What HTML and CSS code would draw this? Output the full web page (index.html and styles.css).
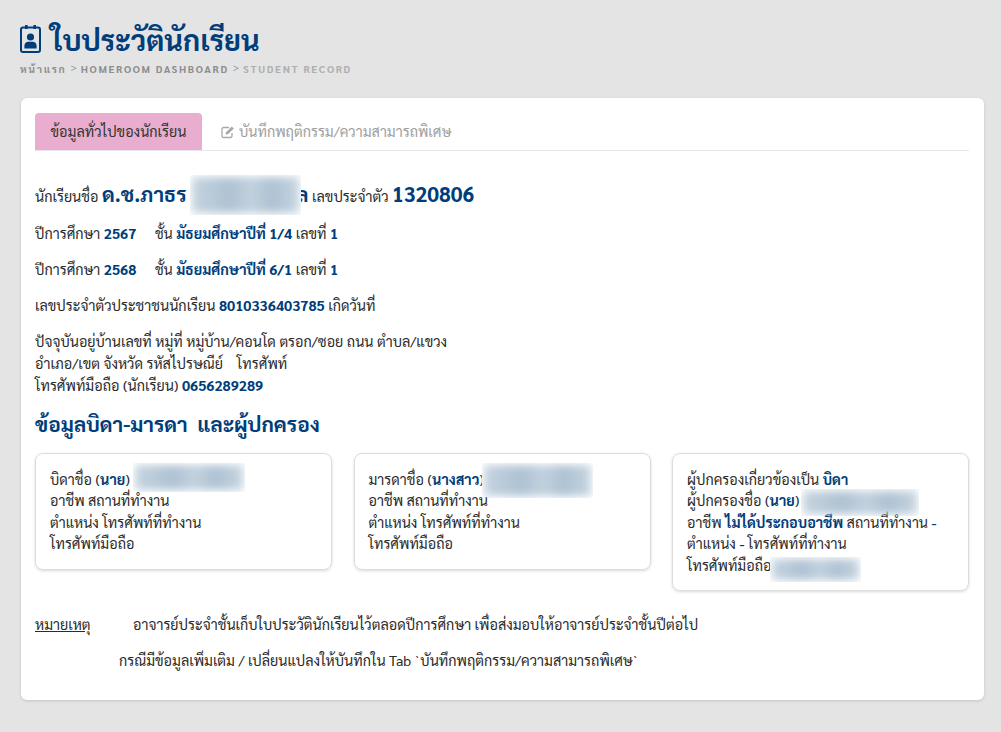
FILE: index.html
```html
<!DOCTYPE html>
<html lang="th">
<head>
<meta charset="utf-8">
<title>ใบประวัตินักเรียน</title>
<link rel="stylesheet" href="styles.css">
</head>
<body>
<header class="page-head">
  <h1 class="page-title">
    <svg class="title-icon" viewBox="0 0 21 28" aria-hidden="true">
      <rect x="1" y="2.500" width="19" height="24.500" rx="2" fill="none" stroke="#003d7a" stroke-width="2"/>
      <rect x="5" y="0" width="2.600" height="4" fill="#003d7a"/>
      <rect x="13.400" y="0" width="2.600" height="4" fill="#003d7a"/>
      <circle cx="10.500" cy="12" r="3.600" fill="#003d7a"/>
      <path d="M4.400 23.500v-2.800c0-2.600 2-3.900 3.800-3.900h4.600c1.800 0 3.800 1.300 3.800 3.900v2.800z" fill="#003d7a"/>
    </svg>
    <span>ใบประวัตินักเรียน</span>
  </h1>
  <nav class="crumbs">
    <span>หน้าแรก</span><span class="sep">&gt;</span><span>HOMEROOM DASHBOARD</span><span class="sep">&gt;</span><span class="crumb-last">STUDENT RECORD</span>
  </nav>
</header>
<main class="card">
  <div class="tabs">
    <div class="tab tab-active">ข้อมูลทั่วไปของนักเรียน</div>
    <div class="tab">
      <svg class="tab-icon" viewBox="0 0 14 14" aria-hidden="true">
        <path d="M11 8v3a1.500 1.500 0 0 1-1.500 1.500h-7A1.500 1.500 0 0 1 1 11V4a1.500 1.500 0 0 1 1.500-1.500H8" fill="none" stroke="#a9a9a9" stroke-width="1.300"/>
        <path d="M5 7.200 10.800 1.400l2 2L7 9.200l-2.400.4z" fill="#a9a9a9"/>
      </svg>
      บันทึกพฤติกรรม/ความสามารถพิเศษ
    </div>
  </div>
  <section class="info">
    <p class="line-main">นักเรียนชื่อ <b class="big">ด.ช.ภาธร</b> <span class="blur b-name"><i></i></span><b class="big">ล</b> เลขประจำตัว <b class="big">1320806</b></p>
    <p>ปีการศึกษา <b>2567</b> <span class="gap"></span>ชั้น <b>มัธยมศึกษาปีที่ 1/4</b> เลขที่ <b>1</b></p>
    <p>ปีการศึกษา <b>2568</b> <span class="gap"></span>ชั้น <b>มัธยมศึกษาปีที่ 6/1</b> เลขที่ <b>1</b></p>
    <p>เลขประจำตัวประชาชนนักเรียน <b>8010336403785</b> เกิดวันที่</p>
    <p>ปัจจุบันอยู่บ้านเลขที่ หมู่ที่ หมู่บ้าน/คอนโด ตรอก/ซอย ถนน ตำบล/แขวง<br>อำเภอ/เขต จังหวัด รหัสไปรษณีย์&nbsp;&nbsp;&nbsp; โทรศัพท์<br>โทรศัพท์มือถือ (นักเรียน) <b>0656289289</b></p>
  </section>
  <h2 class="section-title">ข้อมูลบิดา-มารดา &nbsp;และผู้ปกครอง</h2>
  <section class="people">
    <div class="person">บิดาชื่อ (<b>นาย</b>) <span class="blur b-father"><i></i></span><br>อาชีพ สถานที่ทำงาน<br>ตำแหน่ง โทรศัพท์ที่ทำงาน<br>โทรศัพท์มือถือ</div>
    <div class="person">มารดาชื่อ (<b>นางสาว</b>) <span class="blur b-mother"><i></i></span><br>อาชีพ สถานที่ทำงาน<br>ตำแหน่ง โทรศัพท์ที่ทำงาน<br>โทรศัพท์มือถือ</div>
    <div class="person">ผู้ปกครองเกี่ยวข้องเป็น <b>บิดา</b><br>ผู้ปกครองชื่อ (<b>นาย</b>) <span class="blur b-guardian"><i></i></span><br>อาชีพ <b>ไม่ได้ประกอบอาชีพ</b> สถานที่ทำงาน <b>-</b><br>ตำแหน่ง <b>-</b> โทรศัพท์ที่ทำงาน<br>โทรศัพท์มือถือ <span class="blur b-phone"><i></i></span></div>
  </section>
  <section class="notes">
    <p class="note-first"><u class="note-label">หมายเหตุ</u>อาจารย์ประจำชั้นเก็บใบประวัตินักเรียนไว้ตลอดปีการศึกษา เพื่อส่งมอบให้อาจารย์ประจำชั้นปีต่อไป</p>
    <p class="note-second">กรณีมีข้อมูลเพิ่มเติม / เปลี่ยนแปลงให้บันทึกใน Tab `บันทึกพฤติกรรม/ความสามารถพิเศษ`</p>
  </section>
</main>
</body>
</html>
```
FILE: styles.css
```css
* { box-sizing: border-box; }
html, body { margin: 0; height: 732px; overflow: hidden; }
body {
  background: #e4e4e4;
  font-family: Sarabun, "Noto Sans Thai Looped", Lato, sans-serif;
  font-size: 14.4px;
  line-height: 21.6px;
  color: #2b2b2b;
  padding: 0 17px 0 21px;
}
.page-head { height: 98px; padding-top: 20px; }
.page-title {
  margin: 0 0 0 -1px;
  display: flex;
  align-items: center;
  gap: 9.500px;
  height: 38px;
  font-size: 28.8px;
  line-height: 38px;
  font-weight: 700;
  color: #003d7a;
}
.title-icon { width: 21px; height: 28px; flex: none; }
.crumbs {
  margin: 3px 0 0 -1px;
  display: flex;
  gap: 4px;
  font-size: 10.4px;
  line-height: 16px;
  font-weight: 700;
  letter-spacing: 1.650px;
  color: #8f8f8f;
}
.crumbs .sep { font-weight: 400; line-height: 11px; letter-spacing: 0; }
.crumb-last { color: #b0b0b0; }
.card {
  height: 602px;
  background: #fff;
  border-radius: 6px;
  box-shadow: 0 1px 3px rgba(0, 0, 0, .15);
  padding: 15px 15px 0 14px;
}
.tabs { display: flex; height: 38px; border-bottom: 1px solid #e6e6ee; }
.tab {
  height: 37px;
  padding: 0 0 0 19px;
  display: flex;
  align-items: center;
  gap: 4px;
  color: #a0a0a0;
}
.tab-active {
  width: 167px;
  justify-content: center;
  padding: 0;
  background: #e9aecf;
  color: #333;
  border-radius: 4px 4px 0 0;
}
.tab-icon { width: 14px; height: 14px; flex: none; }
.info { padding-top: 29px; }
.info p { margin: 0 0 14.400px; }
.info b { color: #003d7a; }
.info .line-main { height: 27px; line-height: 27px; margin-bottom: 16.400px; white-space: pre; }
.big { font-size: 20.800px; }
.gap { display: inline-block; width: 15px; }
.section-title {
  margin: -2px 0 0;
  font-size: 20.800px;
  line-height: 30px;
  font-weight: 700;
  color: #003d7a;
}
.people {
  margin-top: 14px;
  display: grid;
  grid-template-columns: repeat(3, 297px);
  column-gap: 21.500px;
  align-items: start;
}
.person {
  border: 1px solid #dcdcdc;
  border-radius: 8px;
  box-shadow: 0 1px 3px rgba(0, 0, 0, .15);
  padding: 15px 14px 14px;
}
.person b { color: #003d7a; }
.blur {
  display: inline-block;
  vertical-align: middle;
  overflow: hidden;
  background: #fff;
  height: 26px;
  margin: -11px 0;
}
.blur i {
  display: block;
  margin: 2px;
  height: calc(100% - 4px);
  background: linear-gradient(90deg, #c6d4e0, #aec2d3 35%, #c2d1de 55%, #aec2d3 75%, #c6d4e0);
  filter: blur(4px);
}
.b-name { position: relative; z-index: 1; width: 111px; height: 40px; margin: -23px -5px -17px 0; }
.b-father { width: 112px; height: 29px; margin: -16px 0 -9px; }
.b-mother { width: 111px; height: 35px; margin: -17px 0 -17px -5px; }
.b-guardian { width: 118px; height: 27px; margin: -13px 0 -13px -2px; }
.b-phone { width: 91px; height: 25px; margin: -8px 0 -13px -5px; }
.notes { margin-top: 23px; }
.notes p { margin: 0; }
.note-label { display: inline-block; width: 98px; }
.note-first { margin-bottom: 14px !important; }
.note-second { padding-left: 84px; }
```
